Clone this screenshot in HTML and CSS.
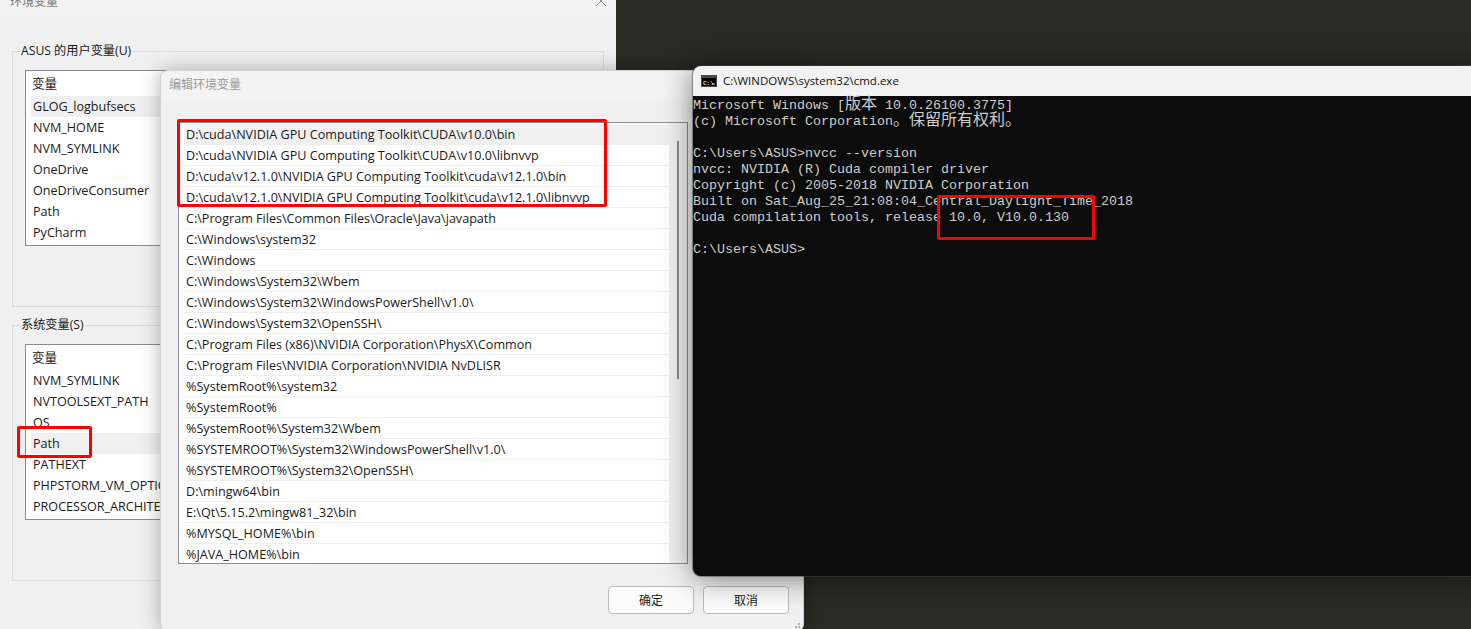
FILE: index.html
```html
<!DOCTYPE html>
<html lang="zh-CN">
<head>
<meta charset="utf-8">
<title>环境变量</title>
<link rel="stylesheet" href="styles.css">
</head>
<body>
<section class="win env">
  <div class="env-title">
    <span class="env-title-text">环境变量</span>
    <svg class="close" width="12" height="12" viewBox="0 0 12 12"><path d="M1 0L11 10M11 0L1 10" stroke="#8a8a8a" stroke-width="1" fill="none"/></svg>
  </div>
  <div class="env-body">
    <fieldset class="group user">
      <legend>ASUS 的用户变量(U)</legend>
      <div class="vars vars-user">
        <div class="vars-head">变量</div>
        <div class="var sel">GLOG_logbufsecs</div>
        <div class="var">NVM_HOME</div>
        <div class="var">NVM_SYMLINK</div>
        <div class="var">OneDrive</div>
        <div class="var">OneDriveConsumer</div>
        <div class="var">Path</div>
        <div class="var">PyCharm</div>
      </div>
    </fieldset>
    <fieldset class="group system">
      <legend>系统变量(S)</legend>
      <div class="vars vars-sys">
        <div class="vars-head">变量</div>
        <div class="var">NVM_SYMLINK</div>
        <div class="var">NVTOOLSEXT_PATH</div>
        <div class="var">OS</div>
        <div class="var sel">Path</div>
        <div class="var">PATHEXT</div>
        <div class="var">PHPSTORM_VM_OPTIONS</div>
        <div class="var">PROCESSOR_ARCHITECTURE</div>
      </div>
    </fieldset>
  </div>
</section>

<section class="win edit">
  <div class="edit-title">编辑环境变量</div>
  <div class="edit-body">
    <div class="paths">
      <div class="path-list">
        <div class="path sel">D:\cuda\NVIDIA GPU Computing Toolkit\CUDA\v10.0\bin</div>
        <div class="path">D:\cuda\NVIDIA GPU Computing Toolkit\CUDA\v10.0\libnvvp</div>
        <div class="path">D:\cuda\v12.1.0\NVIDIA GPU Computing Toolkit\cuda\v12.1.0\bin</div>
        <div class="path">D:\cuda\v12.1.0\NVIDIA GPU Computing Toolkit\cuda\v12.1.0\libnvvp</div>
        <div class="path">C:\Program Files\Common Files\Oracle\Java\javapath</div>
        <div class="path">C:\Windows\system32</div>
        <div class="path">C:\Windows</div>
        <div class="path">C:\Windows\System32\Wbem</div>
        <div class="path">C:\Windows\System32\WindowsPowerShell\v1.0\</div>
        <div class="path">C:\Windows\System32\OpenSSH\</div>
        <div class="path">C:\Program Files (x86)\NVIDIA Corporation\PhysX\Common</div>
        <div class="path">C:\Program Files\NVIDIA Corporation\NVIDIA NvDLISR</div>
        <div class="path">%SystemRoot%\system32</div>
        <div class="path">%SystemRoot%</div>
        <div class="path">%SystemRoot%\System32\Wbem</div>
        <div class="path">%SYSTEMROOT%\System32\WindowsPowerShell\v1.0\</div>
        <div class="path">%SYSTEMROOT%\System32\OpenSSH\</div>
        <div class="path">D:\mingw64\bin</div>
        <div class="path">E:\Qt\5.15.2\mingw81_32\bin</div>
        <div class="path">%MYSQL_HOME%\bin</div>
        <div class="path">%JAVA_HOME%\bin</div>
      </div>
      <div class="scrollbar"><div class="thumb"></div></div>
    </div>
    <div class="buttons">
      <button class="btn primary">确定</button>
      <button class="btn">取消</button>
    </div>
  </div>
  <svg class="grip" width="8" height="8" viewBox="0 0 8 8"><path d="M5 0h2v2H5zM2 3h2v2H2zM5 3h2v2H5zM-1 6h2v2h-2zM2 6h2v2H2zM5 6h2v2H5z" fill="#b4b4b4"/></svg>
</section>

<section class="win cmd">
  <div class="cmd-title">
    <svg class="cmd-icon" width="16" height="12" viewBox="0 0 16 12"><rect width="16" height="12" fill="#4a4a4a"/><rect x="1" y="3" width="14" height="8" fill="#000"/><text x="2" y="9.5" class="cmd-icon-text">C:\</text><rect x="11" y="8.5" width="3" height="1" fill="#ddd"/></svg>
    <span class="cmd-title-text">C:\WINDOWS\system32\cmd.exe</span>
  </div>
  <pre class="console">Microsoft Windows [<span class="wide">版本</span> 10.0.26100.3775]
(c) Microsoft Corporation<span class="wide">。保留所有权利。</span>

C:\Users\ASUS&gt;nvcc --version
nvcc: NVIDIA (R) Cuda compiler driver
Copyright (c) 2005-2018 NVIDIA Corporation
Built on Sat_Aug_25_21:08:04_Central_Daylight_Time_2018
Cuda compilation tools, release 10.0, V10.0.130

C:\Users\ASUS&gt;</pre>
</section>

<div class="mark mark-paths"></div>
<div class="mark mark-var"></div>
<div class="mark mark-ver"></div>
</body>
</html>
```
FILE: styles.css
```css
* { box-sizing: border-box; }
html, body { margin: 0; height: 100%; }
body {
  width: 1471px;
  height: 629px;
  overflow: hidden;
  position: relative;
  background: #2a2b25;
  font-family: "Open Sans", "Noto Sans CJK SC", sans-serif;
  font-size: 12.6px;
  color: #1a1a1a;
}
.win { position: absolute; }

/* back window */
.env { left: 0; top: 0; width: 616px; height: 629px; background: #f0f0f0; }
.env-title { height: 17px; background: #f3f3f3; position: relative; overflow: hidden; }
.env-title-text { position: absolute; left: 10px; top: -8px; color: #777; font-size: 12px; line-height: 20px; }
.close { position: absolute; left: 595px; top: -4px; }
.env-body { padding: 34px 12px 0; display: flex; flex-direction: column; gap: 18px; }
.group {
  margin: 0;
  padding: 0 0 0 12px;
  border: 1px solid #dcdcdc;
  width: 592px;
  height: 256px;
  min-width: 0;
}
.group legend { margin-left: -5px; padding: 0 1px; font-size: 12.2px; line-height: 0; height: 1px; }
.vars { margin-top: 18px; width: 560px; background: #fff; border: 1px solid #8a8a96; }
.vars-user { height: 176px; }
.vars-sys { height: 176px; }
.vars-head { height: 25px; line-height: 26px; padding-left: 6px; }
.var { height: 21px; line-height: 21px; margin-left: 5px; padding-left: 2px; white-space: nowrap; }
.var.sel { background: #f0f0f0; }

/* edit dialog */
.edit {
  left: 160px;
  top: 70px;
  width: 644px;
  height: 562px;
  background: #f0f0f0;
  border-radius: 8px;
  border: 1px solid #d4d4d4;
  box-shadow: 0 0 20px rgba(0,0,0,.3);
}
.edit-title { height: 30px; padding-left: 8px; font-size: 12px; line-height: 28px; background: #f3f3f3; color: #999; border-radius: 8px 8px 0 0; }
.edit-body { padding: 21px 0 0 17px; }
.paths { width: 510px; height: 442px; background: #fff; border: 1px solid #8a8a96; display: flex; }
.path-list { flex: 1; padding: 1px 0 0 5px; overflow: hidden; }
.path { height: 21px; line-height: 21px; padding-left: 2px; border-bottom: 1px solid #eeeeee; white-space: nowrap; }
.path.sel { background: #f0f0f0; }
.path:last-child { border-bottom: 0; }
.scrollbar { width: 18px; background: #f0f0f0; padding: 18px 0 0 8px; }
.thumb { width: 2px; height: 238px; background: #8a8a8a; }
.buttons { display: flex; gap: 9px; margin: 22px 0 0 430px; }
.btn {
  width: 86px;
  height: 28px;
  padding: 0;
  font: inherit;
  font-size: 12px;
  color: #1a1a1a;
  background: #fbfbfb;
  border: 1px solid #bbb;
  border-radius: 4px;
}
.grip { position: absolute; right: 2px; bottom: 0; }

/* console */
.cmd {
  left: 693px;
  top: 66px;
  width: 790px;
  height: 510px;
  background: #0c0c0c;
  border-radius: 8px 0 0 8px;
  overflow: hidden;
  box-shadow: 0 0 0 1px rgba(70,70,70,.5), 0 2px 30px rgba(0,0,0,.5);
}
.cmd-title { height: 30px; background: #f2f2f2; display: flex; align-items: center; gap: 6px; padding-left: 8px; color: #111; }
.cmd-title-text { font-size: 11.5px; margin-bottom: 2px; }
.cmd-icon-text { font-family: "Liberation Mono", monospace; font-size: 6px; font-weight: 700; fill: #ddd; }
.console {
  margin: 0;
  padding: 2px 0 0;
  color: #cccccc;
  font-family: "Liberation Mono", monospace;
  font-size: 13.33px;
  line-height: 16px;
}
.wide { font-family: "Noto Sans CJK SC", sans-serif; font-size: 16px; line-height: 0; }

/* red annotation boxes */
.mark { position: absolute; border: 3px solid #ff0000; border-radius: 2px; }
.mark-paths { left: 177px; top: 119px; width: 430px; height: 88px; }
.mark-var { left: 17px; top: 426px; width: 75px; height: 32px; }
.mark-ver { left: 937px; top: 195px; width: 158px; height: 45px; }
```
